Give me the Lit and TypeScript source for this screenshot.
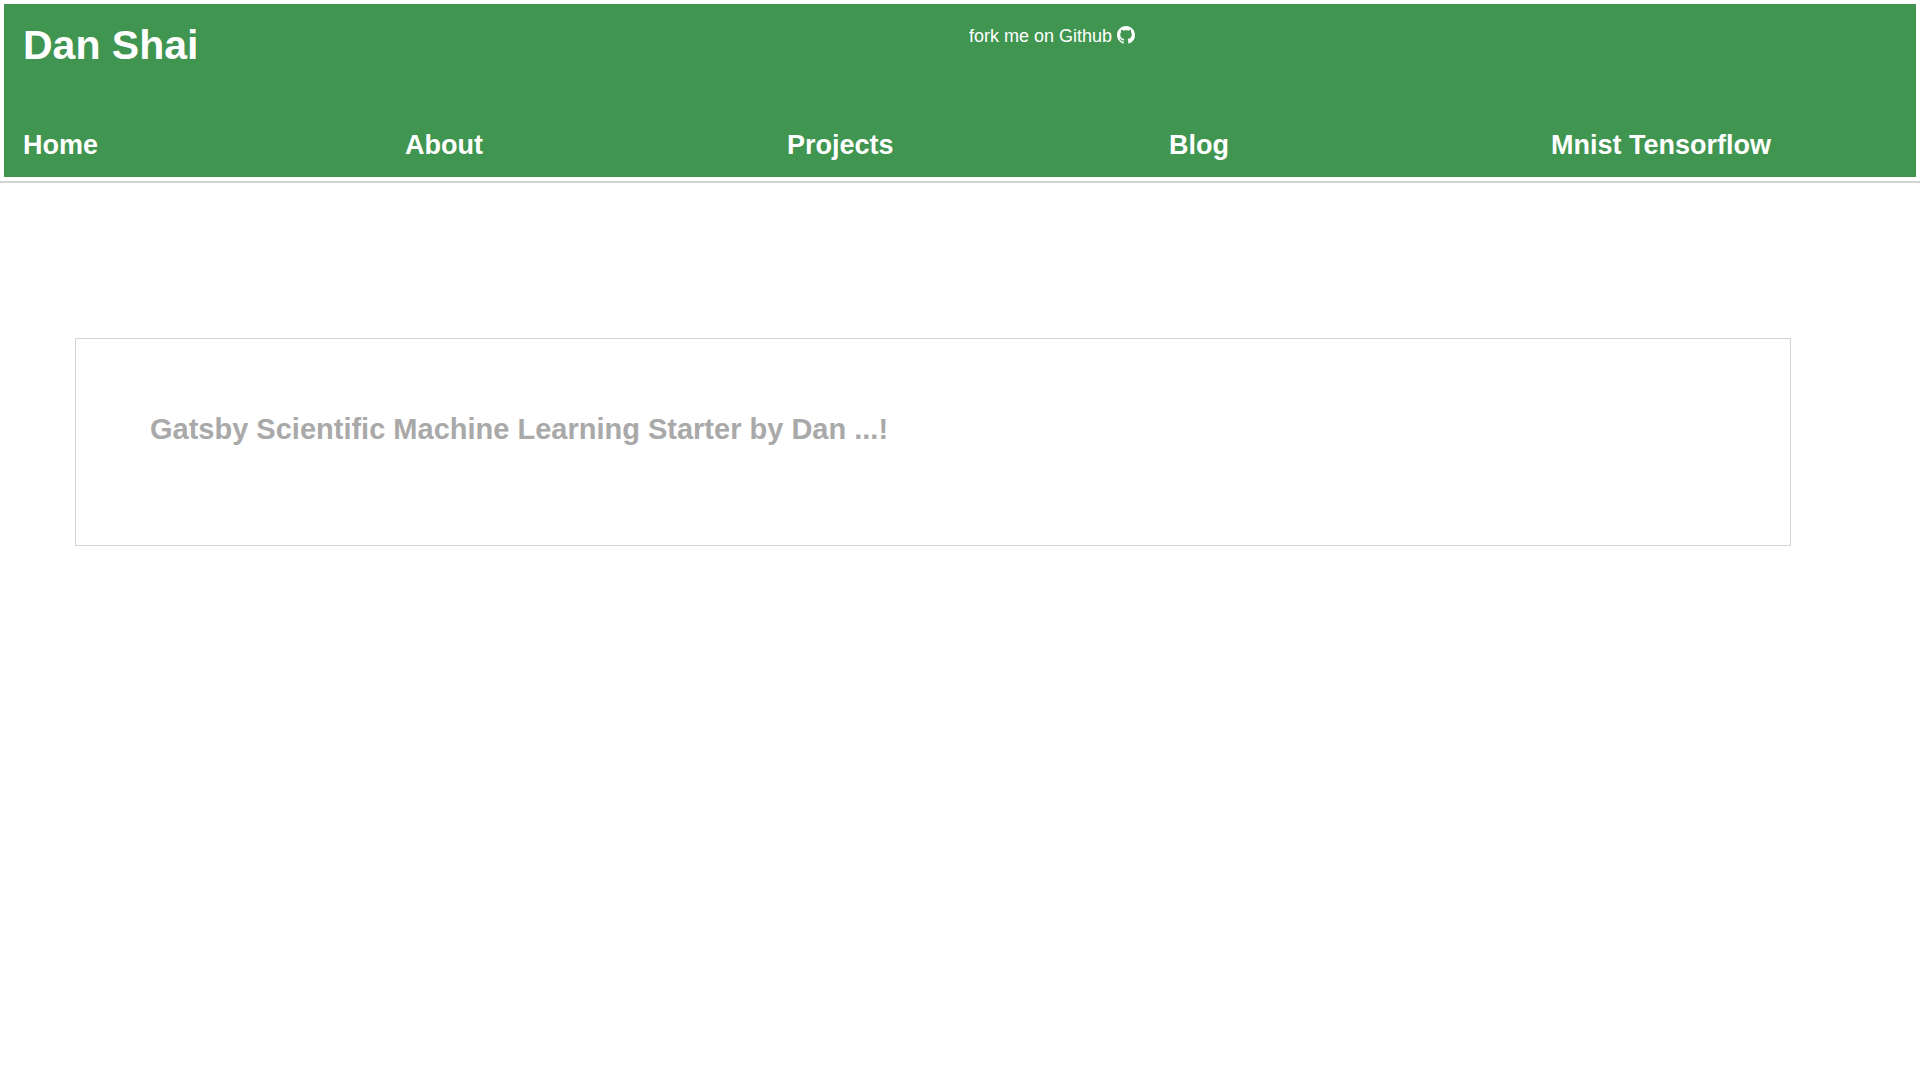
import { LitElement, html, css } from "lit";
import { customElement } from "lit/decorators.js";

const LINKS = ["Home", "About", "Projects", "Blog", "Mnist Tensorflow"];

@customElement("app-root")
export class AppRoot extends LitElement {
  static styles = css`
    :host {
      display: block;
      font-family: "Liberation Sans", Arial, sans-serif;
      font-size: 18px;
      line-height: 28px;
      color: #a9a9a9;
    }
    .header {
      padding: 4px;
      border-bottom: 2px solid #d3d3d3;
    }
    .banner {
      padding: 1px;
      background: #409551;
      color: #fff;
    }
    .top {
      display: grid;
      grid-template-columns: 1fr 1fr;
      align-items: start;
    }
    .title {
      margin: 0;
      padding: 18px 18px 0;
      font-size: 41px;
      line-height: 44px;
    }
    .fork {
      justify-self: start;
      display: flex;
      align-items: center;
      gap: 5px;
      margin: 17px 9px 0;
      color: inherit;
      text-decoration: none;
    }
    .mark {
      display: block;
      width: 18px;
      height: 18px;
      margin-bottom: 2px;
      fill: currentColor;
    }
    .nav {
      display: grid;
      grid-template-columns: repeat(5, 1fr);
      margin-top: 62px;
      padding-bottom: 15px;
    }
    .link {
      padding: 0 18px;
      font-size: 27px;
      line-height: 32px;
      font-weight: bold;
      color: inherit;
      text-decoration: none;
    }
    .card {
      margin: 155px 129px 0 75px;
      padding: 72px 74px 98px;
      border: 1px solid #d3d3d3;
    }
    .heading {
      margin: 0;
      font-size: 29px;
      line-height: 36px;
    }
  `;

  render() {
    return html`
      <header class="header">
        <div class="banner">
          <div class="top">
            <h1 class="title">Dan Shai</h1>
            <a class="fork" href="#github">
              <span>fork me on Github</span>
              <svg class="mark" viewBox="0 0 16 16" aria-hidden="true">
                <path
                  d="M8 0C3.58 0 0 3.58 0 8c0 3.54 2.29 6.53 5.47 7.59.4.07.55-.17.55-.38 0-.19-.01-.82-.01-1.49-2.01.37-2.53-.49-2.69-.94-.09-.23-.48-.94-.82-1.13-.28-.15-.68-.52-.01-.53.63-.01 1.08.58 1.23.82.72 1.21 1.87.87 2.33.66.07-.52.28-.87.51-1.07-1.78-.2-3.64-.89-3.64-3.95 0-.87.31-1.59.82-2.15-.08-.2-.36-1.02.08-2.12 0 0 .67-.21 2.2.82.64-.18 1.32-.27 2-.27s1.36.09 2 .27c1.53-1.04 2.2-.82 2.2-.82.44 1.1.16 1.92.08 2.12.51.56.82 1.27.82 2.15 0 3.07-1.87 3.75-3.65 3.95.29.25.54.73.54 1.48 0 1.07-.01 1.93-.01 2.2 0 .21.15.46.55.38A8.01 8.01 0 0 0 16 8c0-4.42-3.58-8-8-8z"
                />
              </svg>
            </a>
          </div>
          <nav class="nav">
            ${LINKS.map((name) => html`<a class="link" href="#${name}">${name}</a>`)}
          </nav>
        </div>
      </header>
      <main class="card">
        <h2 class="heading">Gatsby Scientific Machine Learning Starter by Dan ...!</h2>
      </main>
    `;
  }
}
